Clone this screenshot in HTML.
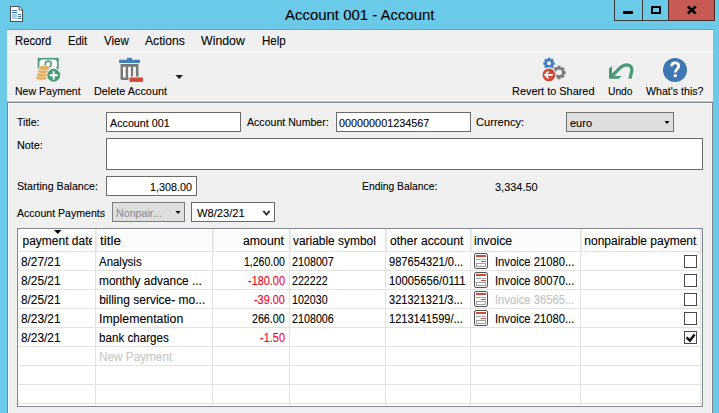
<!DOCTYPE html>
<html><head><meta charset="utf-8"><style>
html,body{margin:0;padding:0;}
body{width:719px;height:413px;overflow:hidden;position:relative;background:#6ccae9;font-family:"Liberation Sans",sans-serif;}
.r{position:absolute;}
.t{position:absolute;white-space:pre;transform-origin:0 0;-webkit-text-stroke:0.1px currentColor;}
</style></head><body>
<div class='r' style='left:7px;top:30px;width:706px;height:383px;background:#f0f0f0;'></div>
<div class='r' style='left:7px;top:29px;width:706px;height:1px;background:#62a8c2;'></div>
<div class='r' style='left:7px;top:51px;width:706px;height:1px;background:#ffffff;'></div>
<div class='r' style='left:7px;top:100px;width:706px;height:1px;background:#f7f7f7;'></div>
<div class='r' style='left:7px;top:101px;width:706px;height:1px;background:#c4c4c4;'></div>
<div class='r' style='left:7px;top:102px;width:706px;height:1px;background:#80868f;'></div>
<div class='r' style='left:7px;top:102px;width:1px;height:311px;background:#7e838c;'></div>
<div class='r' style='left:712px;top:102px;width:1px;height:311px;background:#7e838c;'></div>
<div class='r' style='left:8px;top:103px;width:704px;height:1px;background:#f7f7f7;'></div>
<div class='r' style='left:8px;top:103px;width:1px;height:310px;background:#f6f6f6;'></div>
<div class='r' style='left:711px;top:103px;width:1px;height:310px;background:#f6f6f6;'></div>
<div class='r' style='left:614px;top:-1px;width:101px;height:22px;box-sizing:border-box;border:1px solid #3a3a3a;'></div>
<div class='r' style='left:642px;top:0px;width:1px;height:20px;background:#3a3a3a;'></div>
<div class='r' style='left:668px;top:0px;width:1px;height:20px;background:#3a3a3a;'></div>
<div class='r' style='left:668px;top:-1px;width:47px;height:22px;background:#c75a52;box-sizing:border-box;border:1px solid #4a2a2a;'></div>
<div class='r' style='left:623px;top:11px;width:10px;height:3px;background:#000;'></div>
<div class='r' style='left:651px;top:6px;width:10px;height:8px;box-sizing:border-box;border:2px solid #000;'></div>
<div class='r' style='left:106px;top:112px;width:135px;height:20px;background:#fff;box-sizing:border-box;border:1px solid #6a6a6a;'></div>
<div class='r' style='left:336px;top:112px;width:135px;height:20px;background:#fff;box-sizing:border-box;border:1px solid #6a6a6a;'></div>
<div class='r' style='left:566px;top:112px;width:108px;height:20px;background:#dedede;box-sizing:border-box;border:1px solid #747474;'></div>
<div class='r' style='left:106px;top:138px;width:597px;height:32px;background:#fff;box-sizing:border-box;border:1px solid #6a6a6a;'></div>
<div class='r' style='left:106px;top:176px;width:91px;height:20px;background:#fff;box-sizing:border-box;border:1px solid #6a6a6a;'></div>
<div class='r' style='left:112px;top:202px;width:73px;height:20px;background:#dedede;box-sizing:border-box;border:1px solid #7c7c7c;'></div>
<div class='r' style='left:191px;top:202px;width:84px;height:20px;background:#fff;box-sizing:border-box;border:1px solid #6a6a6a;'></div>
<div class='r' style='left:17px;top:228px;width:686px;height:179px;background:#fff;box-sizing:border-box;border:1px solid #828790;'></div>
<div class='r' style='left:18px;top:251px;width:684px;height:1px;background:#e3e3e3;'></div>
<div class='r' style='left:18px;top:270px;width:684px;height:1px;background:#e3e3e3;'></div>
<div class='r' style='left:18px;top:289px;width:684px;height:1px;background:#e3e3e3;'></div>
<div class='r' style='left:18px;top:308px;width:684px;height:1px;background:#e3e3e3;'></div>
<div class='r' style='left:18px;top:327px;width:684px;height:1px;background:#e3e3e3;'></div>
<div class='r' style='left:18px;top:346px;width:684px;height:1px;background:#e3e3e3;'></div>
<div class='r' style='left:18px;top:365px;width:684px;height:1px;background:#e3e3e3;'></div>
<div class='r' style='left:18px;top:384px;width:684px;height:1px;background:#e3e3e3;'></div>
<div class='r' style='left:18px;top:403px;width:684px;height:1px;background:#e3e3e3;'></div>
<div class='r' style='left:18px;top:229px;width:684px;height:22px;background:#fcfcfc;'></div>
<div class='r' style='left:95px;top:229px;width:1px;height:177px;background:#e3e3e3;'></div>
<div class='r' style='left:96px;top:229px;width:1px;height:22px;background:#ebebeb;'></div>
<div class='r' style='left:212px;top:229px;width:1px;height:177px;background:#e3e3e3;'></div>
<div class='r' style='left:213px;top:229px;width:1px;height:22px;background:#ebebeb;'></div>
<div class='r' style='left:289px;top:229px;width:1px;height:177px;background:#e3e3e3;'></div>
<div class='r' style='left:290px;top:229px;width:1px;height:22px;background:#ebebeb;'></div>
<div class='r' style='left:385px;top:229px;width:1px;height:177px;background:#e3e3e3;'></div>
<div class='r' style='left:386px;top:229px;width:1px;height:22px;background:#ebebeb;'></div>
<div class='r' style='left:470px;top:229px;width:1px;height:177px;background:#e3e3e3;'></div>
<div class='r' style='left:471px;top:229px;width:1px;height:22px;background:#ebebeb;'></div>
<div class='r' style='left:580px;top:229px;width:1px;height:177px;background:#e3e3e3;'></div>
<div class='r' style='left:581px;top:229px;width:1px;height:22px;background:#ebebeb;'></div>
<div class='r' style='left:700px;top:229px;width:1px;height:177px;background:#e3e3e3;'></div>
<div class='r' style='left:701px;top:229px;width:1px;height:22px;background:#ebebeb;'></div>
<div class='r' style='left:684px;top:255px;width:13px;height:13px;background:#fff;box-sizing:border-box;border:1px solid #4a4a4a;'></div>
<div class='r' style='left:684px;top:274px;width:13px;height:13px;background:#fff;box-sizing:border-box;border:1px solid #4a4a4a;'></div>
<div class='r' style='left:684px;top:293px;width:13px;height:13px;background:#fff;box-sizing:border-box;border:1px solid #4a4a4a;'></div>
<div class='r' style='left:684px;top:312px;width:13px;height:13px;background:#fff;box-sizing:border-box;border:1px solid #4a4a4a;'></div>
<div class='r' style='left:684px;top:331px;width:13px;height:13px;background:#fff;box-sizing:border-box;border:1px solid #4a4a4a;'></div>
<svg class='r' style='left:473px;top:252px;width:17px;height:18px' viewBox='0 0 17 18'>
 <rect x='1.5' y='1.5' width='13' height='15' rx='1.6' fill='#fff' stroke='#505050' stroke-width='1'/>
 <rect x='3' y='3' width='10' height='2' fill='#d04a36'/>
 <rect x='3' y='7' width='5' height='1' fill='#a0a0a0'/>
 <rect x='9' y='7' width='4' height='1' fill='#a0a0a0'/>
 <rect x='8' y='9' width='5' height='1' fill='#d04a36'/>
 <rect x='3.5' y='11.5' width='9' height='3' fill='none' stroke='#a0a0a0' stroke-width='1'/>
</svg>
<svg class='r' style='left:473px;top:271px;width:17px;height:18px' viewBox='0 0 17 18'>
 <rect x='1.5' y='1.5' width='13' height='15' rx='1.6' fill='#fff' stroke='#505050' stroke-width='1'/>
 <rect x='3' y='3' width='10' height='2' fill='#d04a36'/>
 <rect x='3' y='7' width='5' height='1' fill='#a0a0a0'/>
 <rect x='9' y='7' width='4' height='1' fill='#a0a0a0'/>
 <rect x='8' y='9' width='5' height='1' fill='#d04a36'/>
 <rect x='3.5' y='11.5' width='9' height='3' fill='none' stroke='#a0a0a0' stroke-width='1'/>
</svg>
<svg class='r' style='left:473px;top:290px;width:17px;height:18px' viewBox='0 0 17 18'>
 <rect x='1.5' y='1.5' width='13' height='15' rx='1.6' fill='#fff' stroke='#505050' stroke-width='1'/>
 <rect x='3' y='3' width='10' height='2' fill='#d04a36'/>
 <rect x='3' y='7' width='5' height='1' fill='#a0a0a0'/>
 <rect x='9' y='7' width='4' height='1' fill='#a0a0a0'/>
 <rect x='8' y='9' width='5' height='1' fill='#d04a36'/>
 <rect x='3.5' y='11.5' width='9' height='3' fill='none' stroke='#a0a0a0' stroke-width='1'/>
</svg>
<svg class='r' style='left:473px;top:309px;width:17px;height:18px' viewBox='0 0 17 18'>
 <rect x='1.5' y='1.5' width='13' height='15' rx='1.6' fill='#fff' stroke='#505050' stroke-width='1'/>
 <rect x='3' y='3' width='10' height='2' fill='#d04a36'/>
 <rect x='3' y='7' width='5' height='1' fill='#a0a0a0'/>
 <rect x='9' y='7' width='4' height='1' fill='#a0a0a0'/>
 <rect x='8' y='9' width='5' height='1' fill='#d04a36'/>
 <rect x='3.5' y='11.5' width='9' height='3' fill='none' stroke='#a0a0a0' stroke-width='1'/>
</svg>

<svg class='r' style='left:0;top:0;width:719px;height:413px' viewBox='0 0 719 413'>
 <!-- title icon -->
 <path d='M10.5 6.5 H19 L22.5 10 V21.5 H10.5 Z' fill='#fff' stroke='#505050' stroke-width='1.1' stroke-linejoin='round'/>
 <path d='M19 6.5 V10 H22.5' fill='#fafafa' stroke='#505050' stroke-width='1'/>
 <rect x='12' y='10' width='5' height='1' fill='#3b6fb0'/>
 <rect x='12' y='12' width='5' height='1' fill='#3b6fb0'/>
 <rect x='12' y='14' width='5' height='5' fill='#a6cdef'/>
 <rect x='18' y='14' width='3' height='1' fill='#3b6fb0'/>
 <rect x='18' y='16' width='3' height='1' fill='#3b6fb0'/>
 <rect x='18' y='18' width='3' height='1' fill='#3b6fb0'/>
 <!-- close x -->
 <path d='M687.8 6.5 L695.7 13.5 M695.7 6.5 L687.8 13.5' stroke='#000' stroke-width='2.6'/>
 <!-- new payment icon -->
 <rect x='37.7' y='57.9' width='21' height='11' fill='#4a9a78'/>
 <path d='M41.3 59.5 H55 L57.1 61.6 V66.5 L55.5 68.4 H41.5 L39.4 66.3 V61.5 Z' fill='#f7fbf8'/>
 <circle cx='48.2' cy='64' r='3' fill='none' stroke='#4a9a78' stroke-width='1.5'/>
 <ellipse cx='41.6' cy='77.6' rx='5.8' ry='2.6' fill='#e5ad5b' stroke='#f0f0f0' stroke-width='0.7'/>
 <ellipse cx='42.4' cy='74.6' rx='5.8' ry='2.6' fill='#e5ad5b' stroke='#f0f0f0' stroke-width='0.7'/>
 <ellipse cx='43.4' cy='71.3' rx='5.6' ry='2.5' fill='#e5ad5b' stroke='#f0f0f0' stroke-width='0.7'/>
 <ellipse cx='44.2' cy='68' rx='5.4' ry='2.5' fill='#e5ad5b' stroke='#f0f0f0' stroke-width='0.7'/>
 <circle cx='53.7' cy='75.3' r='7' fill='#4a9a78' stroke='#f0f0f0' stroke-width='1.1'/>
 <path d='M53.7 71.2 V79.4 M49.6 75.3 H57.8' stroke='#fff' stroke-width='1.9'/>
 <!-- delete icon -->
 <rect x='127' y='57.8' width='5' height='2.4' fill='#3f7fc0'/>
 <rect x='119' y='59.8' width='21' height='3.3' rx='0.8' fill='#3f7fc0'/>
 <path d='M120.5 64 H138.5 V80 H122 Q120.5 80 120.5 78.5 Z' fill='#787878'/>
 <rect x='123' y='66.8' width='2.6' height='10.6' fill='#fff'/>
 <rect x='128.2' y='66.8' width='2.6' height='10.6' fill='#fff'/>
 <rect x='133.2' y='66.8' width='2.6' height='10.6' fill='#fff'/>
 <rect x='128.5' y='76.5' width='15' height='6.2' fill='#f0f0f0'/>
 <rect x='129.5' y='77.5' width='13.5' height='4.4' fill='#d04a36'/>
 <path d='M175.5 75 H183 L179.25 79 Z' fill='#1e1e1e'/>
 <!-- revert icon -->
 <g transform='translate(549 63.3)'><path d='M-1.2 -5.5 h2.4 l0.4 1.8 l1.6 -1 l1.7 1.7 l-1 1.6 l1.8 0.4 v2.4 l-1.8 0.4 l1 1.6 l-1.7 1.7 l-1.6 -1 l-0.4 1.8 h-2.4 l-0.4 -1.8 l-1.6 1 l-1.7 -1.7 l1 -1.6 l-1.8 -0.4 v-2.4 l1.8 -0.4 l-1 -1.6 l1.7 -1.7 l1.6 1 Z' fill='#3f7fc0'/><circle r='2' fill='#f0f0f0'/></g>
 <g transform='translate(559 72.3) scale(1.17)'><path d='M-1.2 -5.5 h2.4 l0.4 1.8 l1.6 -1 l1.7 1.7 l-1 1.6 l1.8 0.4 v2.4 l-1.8 0.4 l1 1.6 l-1.7 1.7 l-1.6 -1 l-0.4 1.8 h-2.4 l-0.4 -1.8 l-1.6 1 l-1.7 -1.7 l1 -1.6 l-1.8 -0.4 v-2.4 l1.8 -0.4 l-1 -1.6 l1.7 -1.7 l1.6 1 Z' fill='#7a7a7a'/><circle r='2.5' fill='#f0f0f0'/></g>
 <circle cx='548.9' cy='74.9' r='7' fill='#d04a36' stroke='#f0f0f0' stroke-width='1.2'/>
 <path d='M552.8 74.9 H545.3 M548.6 71.4 L545.1 74.9 L548.6 78.4' stroke='#fff' stroke-width='1.6' fill='none'/>
 <!-- undo -->
 <path d='M611 76.8 L619.5 68.3 C622 65.8 624.5 64.8 627 64.8 C630.6 64.8 632.6 67.8 631.6 71.8 L629.9 78.7' stroke='#4a9a78' stroke-width='3.3' fill='none'/>
 <path d='M609 68.6 L612 66 L612 76 L621.6 76 L618.9 78.7 L609 78.7 Z' fill='#4a9a78'/>
 <!-- help -->
 <circle cx='675' cy='70' r='12' fill='#3e77b3'/>
 <path d='M671.6 66.2 C671.6 63.9 673.3 62.9 675.1 62.9 C677.1 62.9 678.7 64.1 678.7 66.1 C678.7 68.8 675.3 69.2 675.3 72.4' stroke='#fff' stroke-width='2.7' fill='none'/>
 <rect x='673.8' y='74.3' width='3' height='2.8' fill='#fff'/>
 <!-- combo arrows -->
 <path d='M664.5 121 H669.5 L667 124 Z' fill='#000'/>
 <path d='M175.5 211 H180.5 L178 214 Z' fill='#000'/>
 <path d='M263.3 210.8 L266.5 214.5 L269.7 210.8' stroke='#333' stroke-width='1.9' fill='none'/>
 <!-- sort arrow -->
 <path d='M54 230 H61.5 L57.75 234 Z' fill='#000'/>
 <!-- check -->
 <path d='M686.6 337.4 L689.9 340.6 L694.6 334.6' stroke='#111' stroke-width='2.4' fill='none'/>
</svg>

<span class='t' style='left:285.30px;top:7.00px;font-size:15.5px;line-height:15.5px;color:#000;transform:scaleX(0.9638)'>Account 001 - Account</span>
<span class='t' style='left:15.20px;top:35.00px;font-size:12px;line-height:12px;color:#000;transform:scaleX(0.9383)'>Record</span>
<span class='t' style='left:68.40px;top:35.00px;font-size:12px;line-height:12px;color:#000;transform:scaleX(0.9281)'>Edit</span>
<span class='t' style='left:103.90px;top:35.00px;font-size:12px;line-height:12px;color:#000;transform:scaleX(0.9614)'>View</span>
<span class='t' style='left:145.20px;top:35.00px;font-size:12px;line-height:12px;color:#000;transform:scaleX(1.0087)'>Actions</span>
<span class='t' style='left:201.10px;top:35.00px;font-size:12px;line-height:12px;color:#000;transform:scaleX(1.0284)'>Window</span>
<span class='t' style='left:261.60px;top:35.00px;font-size:12px;line-height:12px;color:#000;transform:scaleX(0.9641)'>Help</span>
<span class='t' style='left:14.80px;top:86.00px;font-size:11.5px;line-height:11.5px;color:#000;transform:scaleX(0.9163)'>New Payment</span>
<span class='t' style='left:93.60px;top:86.00px;font-size:11.5px;line-height:11.5px;color:#000;transform:scaleX(0.9436)'>Delete Account</span>
<span class='t' style='left:511.50px;top:86.00px;font-size:11.5px;line-height:11.5px;color:#000;transform:scaleX(0.9490)'>Revert to Shared</span>
<span class='t' style='left:607.50px;top:86.00px;font-size:11.5px;line-height:11.5px;color:#000;transform:scaleX(0.8909)'>Undo</span>
<span class='t' style='left:645.50px;top:86.00px;font-size:11.5px;line-height:11.5px;color:#000;transform:scaleX(0.9232)'>What&#x27;s this?</span>
<span class='t' style='left:17.30px;top:117.00px;font-size:11.5px;line-height:11.5px;color:#000;transform:scaleX(0.9184)'>Title:</span>
<span class='t' style='left:109.80px;top:118.00px;font-size:11.5px;line-height:11.5px;color:#000;transform:scaleX(0.9337)'>Account 001</span>
<span class='t' style='left:246.90px;top:117.00px;font-size:11.5px;line-height:11.5px;color:#000;transform:scaleX(0.9194)'>Account Number:</span>
<span class='t' style='left:339.40px;top:118.00px;font-size:11.5px;line-height:11.5px;color:#000;transform:scaleX(0.9412)'>000000001234567</span>
<span class='t' style='left:476.20px;top:117.00px;font-size:11.5px;line-height:11.5px;color:#000;transform:scaleX(0.9667)'>Currency:</span>
<span class='t' style='left:569.50px;top:118.00px;font-size:11.5px;line-height:11.5px;color:#000;transform:scaleX(0.9552)'>euro</span>
<span class='t' style='left:17.00px;top:140.00px;font-size:11.5px;line-height:11.5px;color:#000;transform:scaleX(0.9382)'>Note:</span>
<span class='t' style='left:16.50px;top:181.00px;font-size:11.5px;line-height:11.5px;color:#000;transform:scaleX(0.9236)'>Starting Balance:</span>
<span class='t' style='left:150.00px;top:182.00px;font-size:11.5px;line-height:11.5px;color:#000;transform:scaleX(0.9360)'>1,308.00</span>
<span class='t' style='left:362.30px;top:181.00px;font-size:11.5px;line-height:11.5px;color:#000;transform:scaleX(0.8989)'>Ending Balance:</span>
<span class='t' style='left:495.20px;top:182.00px;font-size:11.5px;line-height:11.5px;color:#000;transform:scaleX(0.9516)'>3,334.50</span>
<span class='t' style='left:17.00px;top:208.00px;font-size:11.5px;line-height:11.5px;color:#000;transform:scaleX(0.9177)'>Account Payments</span>
<span class='t' style='left:115.50px;top:208.00px;font-size:11.5px;line-height:11.5px;color:#8a9098;transform:scaleX(0.9282)'>Nonpair...</span>
<span class='t' style='left:196.50px;top:208.00px;font-size:11.5px;line-height:11.5px;color:#000;transform:scaleX(0.9709)'>W8/23/21</span>
<div class='r' style='left:18px;top:0;width:74px;height:413px;overflow:hidden'><span class='t' style='left:4.50px;top:235.00px;font-size:12px;line-height:12px;color:#000'>payment date</span></div>
<span class='t' style='left:99.60px;top:235.00px;font-size:12px;line-height:12px;color:#000;transform:scaleX(1.1237)'>title</span>
<span class='t' style='left:243.40px;top:235.00px;font-size:12px;line-height:12px;color:#000;transform:scaleX(1.0242)'>amount</span>
<span class='t' style='left:293.10px;top:235.00px;font-size:12px;line-height:12px;color:#000;transform:scaleX(0.9931)'>variable symbol</span>
<span class='t' style='left:390.20px;top:235.00px;font-size:12px;line-height:12px;color:#000;transform:scaleX(1.0094)'>other account</span>
<span class='t' style='left:474.20px;top:235.00px;font-size:12px;line-height:12px;color:#000;transform:scaleX(1.0225)'>invoice</span>
<span class='t' style='left:584.30px;top:235.00px;font-size:12px;line-height:12px;color:#000'>nonpairable payment</span>
<span class='t' style='left:20.80px;top:255.60px;font-size:12px;line-height:12px;color:#000;transform:scaleX(0.9863)'>8/27/21</span>
<span class='t' style='left:99.20px;top:255.60px;font-size:12px;line-height:12px;color:#000;transform:scaleX(0.9533)'>Analysis</span>
<span class='t' style='left:243.80px;top:255.60px;font-size:12px;line-height:12px;color:#000;transform:scaleX(0.8733)'>1,260.00</span>
<span class='t' style='left:292.10px;top:255.60px;font-size:12px;line-height:12px;color:#000;transform:scaleX(0.8947)'>2108007</span>
<span class='t' style='left:389.20px;top:255.60px;font-size:12px;line-height:12px;color:#000;transform:scaleX(0.9266)'>987654321/0...</span>
<span class='t' style='left:495.40px;top:255.60px;font-size:12px;line-height:12px;color:#000;transform:scaleX(0.9359)'>Invoice 21080...</span>
<span class='t' style='left:20.80px;top:274.60px;font-size:12px;line-height:12px;color:#000;transform:scaleX(0.9863)'>8/25/21</span>
<span class='t' style='left:99.20px;top:274.60px;font-size:12px;line-height:12px;color:#000;transform:scaleX(0.9888)'>monthly advance ...</span>
<span class='t' style='left:247.60px;top:274.60px;font-size:12px;line-height:12px;color:#f5001e;transform:scaleX(0.9090)'>-180.00</span>
<span class='t' style='left:292.10px;top:274.60px;font-size:12px;line-height:12px;color:#000;transform:scaleX(0.8890)'>222222</span>
<span class='t' style='left:389.20px;top:274.60px;font-size:12px;line-height:12px;color:#000;transform:scaleX(0.9370)'>10005656/0111</span>
<span class='t' style='left:495.40px;top:274.60px;font-size:12px;line-height:12px;color:#000;transform:scaleX(0.9359)'>Invoice 80070...</span>
<span class='t' style='left:20.80px;top:293.60px;font-size:12px;line-height:12px;color:#000;transform:scaleX(0.9863)'>8/25/21</span>
<span class='t' style='left:99.20px;top:293.60px;font-size:12px;line-height:12px;color:#000'>billing service- mo...</span>
<span class='t' style='left:253.80px;top:293.60px;font-size:12px;line-height:12px;color:#f5001e;transform:scaleX(0.9051)'>-39.00</span>
<span class='t' style='left:292.10px;top:293.60px;font-size:12px;line-height:12px;color:#000;transform:scaleX(0.8890)'>102030</span>
<span class='t' style='left:389.20px;top:293.60px;font-size:12px;line-height:12px;color:#000;transform:scaleX(0.9204)'>321321321/3...</span>
<span class='t' style='left:495.40px;top:293.60px;font-size:12px;line-height:12px;color:#c2c2c2;transform:scaleX(0.9359)'>Invoice 36565...</span>
<span class='t' style='left:20.80px;top:312.60px;font-size:12px;line-height:12px;color:#000;transform:scaleX(0.9863)'>8/23/21</span>
<span class='t' style='left:99.20px;top:312.60px;font-size:12px;line-height:12px;color:#000;transform:scaleX(1.0275)'>Implementation</span>
<span class='t' style='left:252.00px;top:312.60px;font-size:12px;line-height:12px;color:#000;transform:scaleX(0.8882)'>266.00</span>
<span class='t' style='left:292.10px;top:312.60px;font-size:12px;line-height:12px;color:#000;transform:scaleX(0.8947)'>2108006</span>
<span class='t' style='left:389.20px;top:312.60px;font-size:12px;line-height:12px;color:#000;transform:scaleX(0.9204)'>1213141599/...</span>
<span class='t' style='left:495.40px;top:312.60px;font-size:12px;line-height:12px;color:#000;transform:scaleX(0.9359)'>Invoice 21080...</span>
<span class='t' style='left:20.80px;top:331.60px;font-size:12px;line-height:12px;color:#000;transform:scaleX(0.9863)'>8/23/21</span>
<span class='t' style='left:99.20px;top:331.60px;font-size:12px;line-height:12px;color:#000;transform:scaleX(0.9688)'>bank charges</span>
<span class='t' style='left:259.60px;top:331.60px;font-size:12px;line-height:12px;color:#f5001e;transform:scaleX(0.9138)'>-1.50</span>
<span class='t' style='left:99.20px;top:350.60px;font-size:12px;line-height:12px;color:#c6c6c6;transform:scaleX(0.9799)'>New Payment</span>
</body></html>
